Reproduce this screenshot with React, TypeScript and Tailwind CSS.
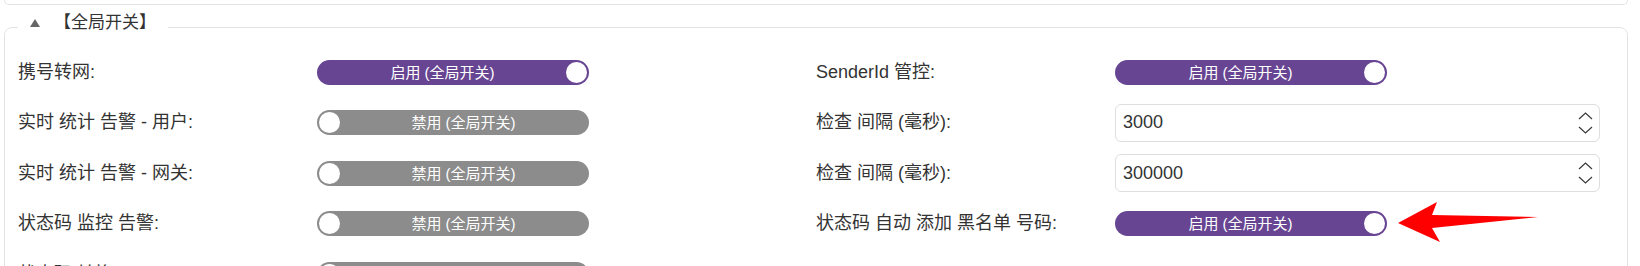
import React from 'react'

type Cell = { label: string; kind: 'on' | 'off' | 'input' | 'none'; value?: string }

const rows: Cell[][] = [
  [{ label: '携号转网:', kind: 'on' }, { label: 'SenderId 管控:', kind: 'on' }],
  [{ label: '实时 统计 告警 - 用户:', kind: 'off' }, { label: '检查 间隔 (毫秒):', kind: 'input', value: '3000' }],
  [{ label: '实时 统计 告警 - 网关:', kind: 'off' }, { label: '检查 间隔 (毫秒):', kind: 'input', value: '300000' }],
  [{ label: '状态码 监控 告警:', kind: 'off' }, { label: '状态码 自动 添加 黑名单 号码:', kind: 'on' }],
  [{ label: '状态码 转换:', kind: 'off' }, { label: '', kind: 'none' }],
]

function Knob() {
  return <span className="w-[21px] h-[21px] rounded-full bg-white shrink-0" />
}

function Toggle({ on }: { on: boolean }) {
  return (
    <div className={`flex items-center w-[272px] h-[25px] rounded-full px-[2px] ${on ? 'bg-[#674592]' : 'bg-[#8c8c8c]'}`}>
      {!on && <Knob />}
      <span className="flex-1 text-center text-white text-[15px] leading-none">
        {on ? '启用 (全局开关)' : '禁用 (全局开关)'}
      </span>
      {on && <Knob />}
    </div>
  )
}

function NumberInput({ value }: { value: string }) {
  return (
    <div className="flex items-center w-[485px] h-[38px] border border-[#dedede] rounded-[6px] pl-[7px] pr-[6px] text-[18px] text-[#333]">
      <span className="flex-1">{value}</span>
      <svg width="15" height="24" viewBox="0 0 15 24" fill="none" stroke="#3a3a3a" strokeWidth="1.2">
        <path d="M1 8 L7.5 2 L14 8" />
        <path d="M1 16 L7.5 22 L14 16" />
      </svg>
    </div>
  )
}

export default function App() {
  return (
    <div className="relative w-[1640px] h-[266px] overflow-hidden bg-white pl-[4px] pr-[12px] font-['Liberation_Sans','Noto_Sans_CJK_SC',sans-serif]">
      {/* bottom edge of the previous card */}
      <div className="h-[5px] border-x border-b border-[#e3e3e3] rounded-b-lg" />

      <fieldset className="mt-[8px] border border-[#e3e3e3] rounded-lg px-[13px] pt-[6px]">
        <legend className="px-[12px] h-[28px]">
          <span className="flex items-center gap-[14px] h-[18px] pt-[1px] text-[17px] leading-none text-[#333]">
            <svg width="10" height="8" viewBox="0 0 10 8">
              <path d="M5 0 L10 8 L0 8 Z" fill="#666" />
            </svg>
            【全局开关】
          </span>
        </legend>

        <div className="grid grid-cols-2">
          {rows.flat().map((c, i) => (
            <div key={i} className="flex items-center h-[50.5px]">
              <span className="w-[299px] shrink-0 text-[18px] text-[#333] whitespace-pre">{c.label}</span>
              {c.kind === 'on' && <Toggle on />}
              {c.kind === 'off' && <Toggle on={false} />}
              {c.kind === 'input' && <NumberInput value={c.value ?? ''} />}
            </div>
          ))}
        </div>
      </fieldset>

      {/* red annotation arrow */}
      <svg className="absolute left-[1390px] top-[195px]" width="155" height="55" viewBox="0 0 155 55">
        <polygon points="8,28 47,7 42,20 148,22 42,33 50,47" fill="#ff0000" />
      </svg>
    </div>
  )
}
